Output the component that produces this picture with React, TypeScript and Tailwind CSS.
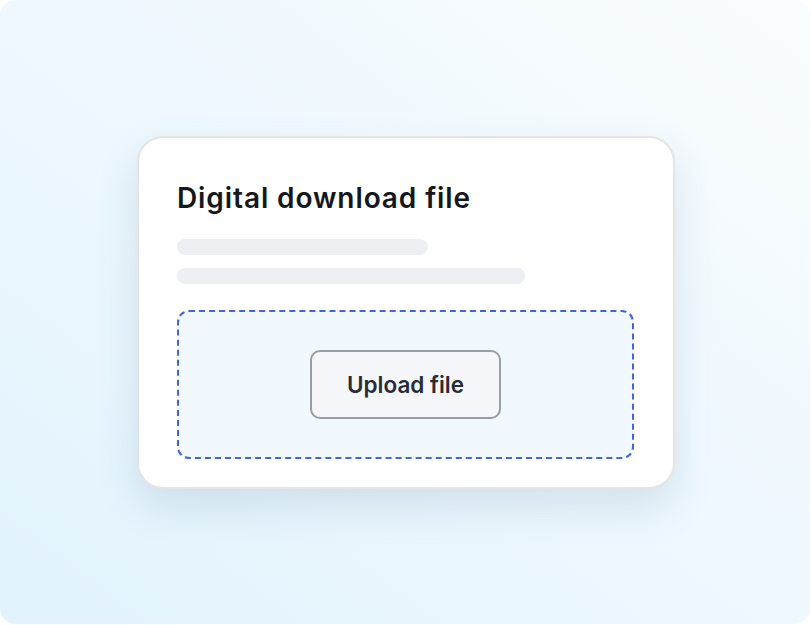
export default function App() {
  return (
    <div className="w-[811px] h-[625px] bg-white">
      <div className="w-[810px] h-[624px] rounded-[16px] bg-gradient-to-tr from-[#e2f3fd] via-[#eef8fe] to-[#fafdff] pt-[136px] pl-[137px]">
        <div className="w-[538px] h-[353px] rounded-[26px] border-2 border-[#e3e4e6] bg-white shadow-[0_18px_40px_rgba(70,110,140,0.16)] px-[38px] pt-[40px] flex flex-col">
          <h1 className="font-['Inter'] font-semibold text-[28px] leading-[40px] text-[#14171c] tracking-[0.9px]">
            Digital download file
          </h1>
          <div className="mt-[21px] flex flex-col gap-[13px]">
            <div className="w-[251px] h-4 rounded-full bg-[#eeeff3]" />
            <div className="w-[348px] h-4 rounded-full bg-[#eeeff3]" />
          </div>
          <div className="mt-[26px] h-[149px] w-[457px] rounded-[12px] border-2 border-dashed border-[#4664d2] bg-[#f1f8fe] flex items-center justify-center">
            <button className="w-[191px] h-[69px] rounded-[10px] border-2 border-[#9a9da3] bg-[#f5f7fb] font-['Inter'] font-semibold text-[22.5px] text-[#272c36]">
              Upload file
            </button>
          </div>
        </div>
      </div>
    </div>
  );
}
